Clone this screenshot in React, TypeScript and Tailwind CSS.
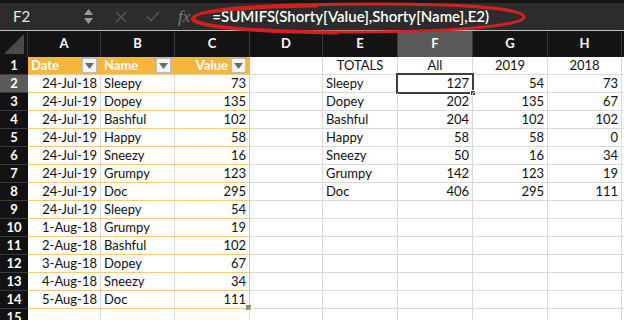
import React from "react";

const COLS = [73, 74, 75, 73, 75, 75, 75, 74];
const LETTERS = ["A", "B", "C", "D", "E", "F", "G", "H"];

const shorty: [string, string, number][] = [
  ["24-Jul-18", "Sleepy", 73],
  ["24-Jul-19", "Dopey", 135],
  ["24-Jul-19", "Bashful", 102],
  ["24-Jul-19", "Happy", 58],
  ["24-Jul-19", "Sneezy", 16],
  ["24-Jul-19", "Grumpy", 123],
  ["24-Jul-19", "Doc", 295],
  ["24-Jul-19", "Sleepy", 54],
  ["1-Aug-18", "Grumpy", 19],
  ["2-Aug-18", "Bashful", 102],
  ["3-Aug-18", "Dopey", 67],
  ["4-Aug-18", "Sneezy", 34],
  ["5-Aug-18", "Doc", 111],
];

const totals: [string, number, number, number][] = [
  ["Sleepy", 127, 54, 73],
  ["Dopey", 202, 135, 67],
  ["Bashful", 204, 102, 102],
  ["Happy", 58, 58, 0],
  ["Sneezy", 50, 16, 34],
  ["Grumpy", 142, 123, 19],
  ["Doc", 406, 295, 111],
];

function FilterButton() {
  return (
    <span className="flex h-[15px] w-[15px] items-center justify-center border border-[#bdbdbd] bg-[#f4f4f4]">
      <svg width="9" height="6" viewBox="0 0 9 6">
        <path d="M0 0h9L4.5 6z" fill="#6b6b6b" />
      </svg>
    </span>
  );
}

function Cell({
  w,
  children,
  className = "",
}: {
  w: number;
  children?: React.ReactNode;
  className?: string;
}) {
  return (
    <div
      className={`relative flex h-[18px] shrink-0 items-center overflow-visible whitespace-nowrap border-b border-r px-[3px] ${className}`}
      style={{ width: w }}
    >
      {children}
    </div>
  );
}

function RowHead({ n, active = false }: { n: number; active?: boolean }) {
  return (
    <div
      className={`flex h-[18px] w-[28px] shrink-0 items-center justify-center border-b border-[#3a3a3a] text-[13px] font-bold text-white ${
        active ? "bg-[#5b5b5b]" : "bg-[#121212]"
      }`}
    >
      {n}
    </div>
  );
}

export default function App() {
  const grid = "border-[#dadada]";
  const tbl = "border-b-[#f7cc78] border-r-[#dcdcdc]";

  const rows = [];
  for (let r = 1; r <= 15; r++) {
    const d = r >= 2 ? shorty[r - 2] : undefined;
    const t = r >= 2 ? totals[r - 2] : undefined;
    rows.push(
      <div key={r} className="flex">
        <RowHead n={r} active={r === 2} />
        {r === 1 ? (
          <>
            <Cell w={COLS[0]} className="justify-between border-b-[#f7cc78] border-r-[#f4b63c] bg-[#f4b63c] font-bold text-white">
              <span>Date</span>
              <FilterButton />
            </Cell>
            <Cell w={COLS[1]} className="justify-between border-b-[#f7cc78] border-r-[#f4b63c] bg-[#f4b63c] font-bold text-white">
              <span>Name</span>
              <FilterButton />
            </Cell>
            <Cell w={COLS[2]} className="justify-end gap-[3px] border-b-[#f7cc78] border-r-[#f4b63c] bg-[#f4b63c] font-bold text-white">
              <span>Value</span>
              <FilterButton />
            </Cell>
          </>
        ) : d ? (
          <>
            <Cell w={COLS[0]} className={`justify-end ${tbl}`}>{d[0]}</Cell>
            <Cell w={COLS[1]} className={tbl}>{d[1]}</Cell>
            <Cell w={COLS[2]} className="justify-end border-b-[#f7cc78] border-r-[#f4c060]">
              {d[2]}
              {r === 14 && (
                <span className="absolute bottom-[-2px] right-[-2px] h-[5px] w-[5px] bg-[#8a8a8a]" />
              )}
            </Cell>
          </>
        ) : (
          <>
            <Cell w={COLS[0]} className={grid} />
            <Cell w={COLS[1]} className={grid} />
            <Cell w={COLS[2]} className={grid} />
          </>
        )}
        <Cell w={COLS[3]} className={grid} />
        {r === 1 ? (
          <>
            <Cell w={COLS[4]} className={`justify-center ${grid}`}>TOTALS</Cell>
            <Cell w={COLS[5]} className={`justify-center ${grid}`}>All</Cell>
            <Cell w={COLS[6]} className={`justify-center ${grid}`}>2019</Cell>
            <Cell w={COLS[7]} className={`justify-center ${grid}`}>2018</Cell>
          </>
        ) : t ? (
          <>
            <Cell w={COLS[4]} className={grid}>{t[0]}</Cell>
            <Cell w={COLS[5]} className={`justify-end ${grid}`}>
              {t[1]}
              {r === 2 && (
                <>
                  <span className="pointer-events-none absolute inset-[-2px] border-2 border-[#3f3f3f]" />
                  <span className="absolute bottom-[-4px] right-[-4px] h-[6px] w-[6px] border border-white bg-[#3f3f3f]" />
                </>
              )}
            </Cell>
            <Cell w={COLS[6]} className={`justify-end ${grid}`}>{t[2]}</Cell>
            <Cell w={COLS[7]} className={`justify-end ${grid}`}>{t[3]}</Cell>
          </>
        ) : (
          <>
            <Cell w={COLS[4]} className={grid} />
            <Cell w={COLS[5]} className={grid} />
            <Cell w={COLS[6]} className={grid} />
            <Cell w={COLS[7]} className={grid} />
          </>
        )}
        <div className="h-[18px] flex-1 border-b border-[#dadada]" />
      </div>
    );
  }

  return (
    <div
      className="h-[320px] w-[624px] overflow-hidden bg-white text-[13px] text-[#111]"
      style={{ fontFamily: "Lato, 'Liberation Sans', sans-serif" }}
    >
      {/* formula bar */}
      <div className="relative h-[30px] border-t-[3px] border-[#151515] bg-[#2c2c2c]">
        <div className="flex h-full items-center">
          <div className="flex w-[105px] items-center justify-between pl-[13px] pr-[12px]">
            <span className="text-[15px] text-[#e8e8e8]">F2</span>
            <span className="flex flex-col gap-[3px]">
              <svg width="9" height="6" viewBox="0 0 9 6">
                <path d="M0 6h9L4.5 0z" fill="#9a9a9a" />
              </svg>
              <svg width="9" height="6" viewBox="0 0 9 6">
                <path d="M0 0h9L4.5 6z" fill="#9a9a9a" />
              </svg>
            </span>
          </div>
          <svg className="ml-[10px]" width="12" height="12" viewBox="0 0 12 12">
            <path d="M1 1l10 10M11 1L1 11" stroke="#555" strokeWidth="1.6" />
          </svg>
          <svg className="ml-[19px]" width="14" height="11" viewBox="0 0 14 11">
            <path d="M1 5.5l4 4L13 1" stroke="#555" strokeWidth="1.6" fill="none" />
          </svg>
          <span
            className="ml-[18px] text-[17px] italic text-[#7a7a7a]"
            style={{ fontFamily: "'Liberation Serif', serif" }}
          >
            fx
          </span>
          <span className="ml-[22px] text-[15px] font-semibold text-white">
            =SUMIFS(Shorty[Value],Shorty[Name],E2)
          </span>
        </div>
        <svg
          className="pointer-events-none absolute left-[188px] top-[-3px]"
          width="345"
          height="38"
          viewBox="0 0 345 38"
        >
          <path
            d="M6 18 C 6 9, 70 4, 190 4 C 280 4, 336 9, 336 17 C 336 26, 260 32, 170 32 C 70 32, 6 27, 6 18 Z"
            fill="none"
            stroke="#d61f1f"
            strokeWidth="3"
          />
          <path
            d="M4 19 C 4 11, 60 7, 130 6 M4 19 C 6 28, 80 32, 150 33"
            fill="none"
            stroke="#d61f1f"
            strokeWidth="3"
          />
        </svg>
      </div>
      <div className="h-px bg-[#bdbdbd]" />
      {/* column headers */}
      <div className="flex h-[26px] bg-[#141414]">
        <div className="flex w-[28px] shrink-0 items-end justify-end border-r border-[#3a3a3a] pb-[3px] pr-[3px]">
          <svg width="20" height="20" viewBox="0 0 20 20">
            <path d="M20 0V20H0z" fill="#4a4a4a" />
          </svg>
        </div>
        {LETTERS.map((l, i) => (
          <div
            key={l}
            className={`flex shrink-0 items-center justify-center border-r border-[#3a3a3a] text-[13px] font-bold text-white ${
              l === "F" ? "bg-[#5a5a5a]" : ""
            }`}
            style={{ width: COLS[i] }}
          >
            {l}
          </div>
        ))}
        <div className="flex-1" />
      </div>
      {rows}
    </div>
  );
}
